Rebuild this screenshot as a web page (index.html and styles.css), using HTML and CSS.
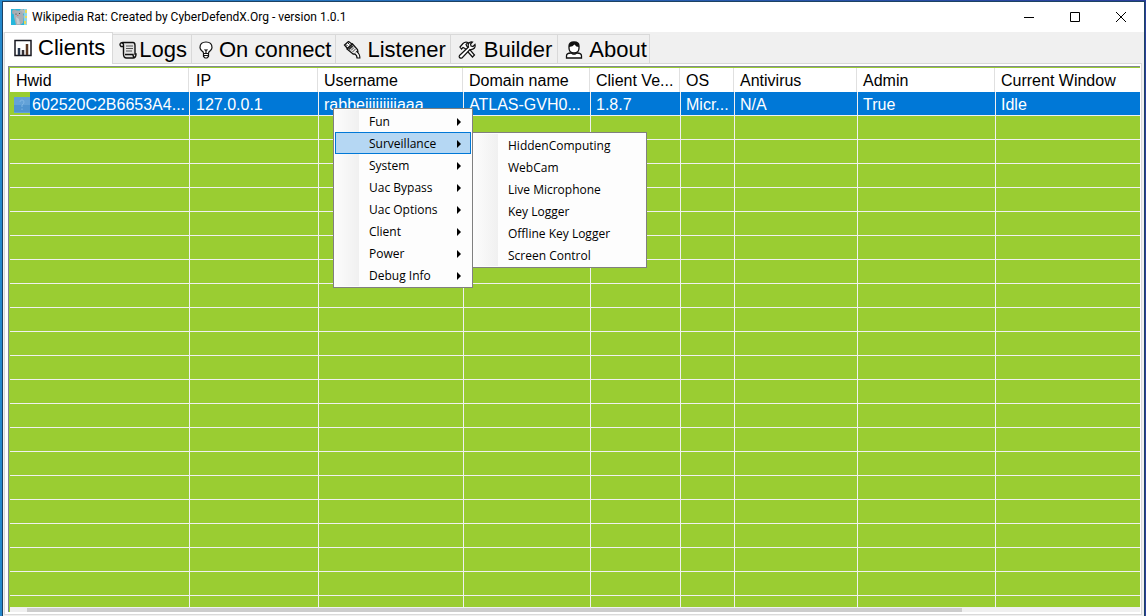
FILE: index.html
```html
<!DOCTYPE html>
<html lang="en">
<head>
<meta charset="utf-8">
<title>Wikipedia Rat: Created by CyberDefendX.Org - version 1.0.1</title>
<link rel="stylesheet" href="styles.css">
</head>
<body>
<main class="window">
  <header class="titlebar">
    <svg class="app-icon" viewBox="0 0 16 16" aria-hidden="true">
      <rect width="16" height="16" fill="#25b7dc"/><path d="M13 0h3v16h-3z" fill="#8fd6e6"/><path d="M14 1h2v3h-2zM14 7h2v2h-2zM13 12h2v3h-2z" fill="#e8d85a"/>
      <circle cx="3.500" cy="3" r="2.500" fill="#a3aab0"/><circle cx="11" cy="2.600" r="2.500" fill="#b4babf"/>
      <path d="M3 3c2-2 6-2 8 0l2 4-1 7-3 2H5l-1-4-1-4z" fill="#a9afb5"/><path d="M5 8l3 2 1 5H6z" fill="#c6cbd0"/>
      <circle cx="5" cy="5" r=".6" fill="#333"/><circle cx="8.500" cy="4.500" r=".6" fill="#333"/><path d="M6 6.500h1.500" stroke="#c77" />
    </svg>
    <h1 class="title">Wikipedia Rat: Created by CyberDefendX.Org - version 1.0.1</h1>
    <div class="controls">
      <button class="control" aria-label="Minimize"><svg viewBox="0 0 12 12"><path d="M1 6.500h10"/></svg></button>
      <button class="control" aria-label="Maximize"><svg viewBox="0 0 12 12"><path d="M1.500 1.500h9v9h-9z"/></svg></button>
      <button class="control" aria-label="Close"><svg viewBox="0 0 12 12"><path d="M1 1l10 10M11 1L1 11"/></svg></button>
    </div>
  </header>
  <div class="client">
    <nav class="tabs" role="tablist">
      <button class="tab selected" role="tab" aria-selected="true">
        <svg class="tab-icon" viewBox="0 0 18 18"><path d="M1 1.500h16v15H1z" fill="#fff" stroke="#17171f" stroke-width="1.500"/><path d="M5 9v7" stroke="#28374d" stroke-width="2.500"/><path d="M9 11v5" stroke="#343036" stroke-width="2.500"/><path d="M13 5v11" stroke="#5b3923" stroke-width="2.500"/></svg>
        <span>Clients</span></button>
      <button class="tab logs" role="tab">
        <svg class="tab-icon" viewBox="0 0 18 18" fill="none"><path d="M4 2h10q2 0 2 2v10q0 3-2 3H7q-2 0-2-3V4z" fill="#e4e4e4"/><path d="M4.500 5.500H2q-1-1-1-2Q1 1.500 4 1.500h10q2 0 2 3V13h1q0 4-3 4H7.500q-3 0-3-4V4q0-2-2-2M6 13.500h8q0 3 2 3" stroke="#111" stroke-width="1.400"/><path d="M7 5h7M7 7.500h7M7 10h6" stroke="#555" stroke-width="1.200"/></svg>
        <span>Logs</span></button>
      <button class="tab narrow" role="tab">
        <svg class="tab-icon bulb" viewBox="0 0 14 18" fill="none" stroke="#111" stroke-width="1.200"><path d="M4.500 12Q4.500 11 2.500 9.500Q1 8 1 6.500Q1 1 7 1T13 6.500Q13 8 11.500 9.500Q9.500 11 9.500 12v3.500l-1.500 1.500H6l-1.500-1.500z" fill="#fff"/><path d="M5.500 8.500l1.500 1 1.500-1M7 10v2M5 12.500h4M5 14.500h4"/></svg>
        <span>On connect</span></button>
      <button class="tab narrow" role="tab">
        <svg class="tab-icon" viewBox="0 0 18 18"><path d="M1.500 4l4-3.500L9 3 4.500 7.500z" fill="#fff" stroke="#111" stroke-width="1.300"/><path d="M3 3.500l1.500 1.500M5 2l1.500 1.500" stroke="#111"/><path d="M4 8l5.500-5 5 5.500q1 2-.5 3.500t-4 1z" fill="#eee" stroke="#111" stroke-width="1.300"/><path d="M5 7.500L9 4l1.500 1.500L6.500 9z" fill="#333"/><path d="M8 9.500l3-3M9.500 11l3-3" stroke="#444"/><path d="M12.500 11.500q3 2 3 6" fill="none" stroke="#111" stroke-width="4"/><path d="M12.500 11.500q3 2 3 5" fill="none" stroke="#fff" stroke-width="1.600"/></svg>
        <span>Listener</span></button>
      <button class="tab builder" role="tab">
        <svg class="tab-icon" viewBox="0 0 18 18"><g fill="#fff" stroke="#111" stroke-width="1.200"><path d="M2 6l3-3.500q2-2 5-1L8 3.500l1 2 7.500 8.500-2 2L7 7.500 5 6.500 3.500 8z"/><path d="M1.500 14.500l9-8.500q-1-3 1-4.500 1.500-1 3-.5L12.500 3l.5 2 2 .5 2-2q.5 2-.5 3.500-2 2-4.500 1.500L4 17q-1.500.5-2.500-.5-.6-1 0-2z"/></g></svg>
        <span>Builder</span></button>
      <button class="tab about" role="tab">
        <svg class="tab-icon" viewBox="0 0 18 18"><path d="M1.500 17v-2q0-3 4.500-3l2 1h2l2-1q4.500 0 4.500 3v2z" fill="#fff" stroke="#111" stroke-width="1.300"/><path d="M4 5q0-4 5-4t5 4v2q0 5-5 5T4 7z" fill="#fff" stroke="#111" stroke-width="1.300"/><path d="M4 6V4q1-3 5-3 5 0 5 5-3 0-4.500-2.500Q8 5.500 4 6z" fill="#111"/></svg>
        <span>About</span></button>
    </nav>
    <section class="page">
      <div class="list">
        <div class="grid-view">
          <table class="grid">
            <colgroup><col class="w-hwid"><col class="w-ip"><col class="w-user"><col class="w-domain"><col class="w-version"><col class="w-os"><col class="w-av"><col class="w-admin"><col></colgroup>
            <thead><tr><th>Hwid</th><th>IP</th><th>Username</th><th>Domain name</th><th>Client Ve...</th><th>OS</th><th>Antivirus</th><th>Admin</th><th>Current Window</th></tr></thead>
            <tbody>
              <tr class="active"><td class="hwid"><svg class="flag" viewBox="0 0 16 16" aria-hidden="true"><path fill="#63a2d8" d="M0 0h16v16H0z"/><path fill="#4f94d0" d="M0 8h16v7H0z"/><path d="M6 5q0-2 2-2t2 2-2 3v2M8 11.500v1.500" fill="none" stroke="#7fb6e4"/></svg>602520C2B6653A4...</td><td>127.0.0.1</td><td>rabbeijjjjjjjjaaa</td><td>ATLAS-GVH0...</td><td>1.8.7</td><td>Micr...</td><td>N/A</td><td>True</td><td>Idle</td></tr>
              <tr><td></td><td></td><td></td><td></td><td></td><td></td><td></td><td></td><td></td></tr>
              <tr><td></td><td></td><td></td><td></td><td></td><td></td><td></td><td></td><td></td></tr>
              <tr><td></td><td></td><td></td><td></td><td></td><td></td><td></td><td></td><td></td></tr>
              <tr><td></td><td></td><td></td><td></td><td></td><td></td><td></td><td></td><td></td></tr>
              <tr><td></td><td></td><td></td><td></td><td></td><td></td><td></td><td></td><td></td></tr>
              <tr><td></td><td></td><td></td><td></td><td></td><td></td><td></td><td></td><td></td></tr>
              <tr><td></td><td></td><td></td><td></td><td></td><td></td><td></td><td></td><td></td></tr>
              <tr><td></td><td></td><td></td><td></td><td></td><td></td><td></td><td></td><td></td></tr>
              <tr><td></td><td></td><td></td><td></td><td></td><td></td><td></td><td></td><td></td></tr>
              <tr><td></td><td></td><td></td><td></td><td></td><td></td><td></td><td></td><td></td></tr>
              <tr><td></td><td></td><td></td><td></td><td></td><td></td><td></td><td></td><td></td></tr>
              <tr><td></td><td></td><td></td><td></td><td></td><td></td><td></td><td></td><td></td></tr>
              <tr><td></td><td></td><td></td><td></td><td></td><td></td><td></td><td></td><td></td></tr>
              <tr><td></td><td></td><td></td><td></td><td></td><td></td><td></td><td></td><td></td></tr>
              <tr><td></td><td></td><td></td><td></td><td></td><td></td><td></td><td></td><td></td></tr>
              <tr><td></td><td></td><td></td><td></td><td></td><td></td><td></td><td></td><td></td></tr>
              <tr><td></td><td></td><td></td><td></td><td></td><td></td><td></td><td></td><td></td></tr>
              <tr><td></td><td></td><td></td><td></td><td></td><td></td><td></td><td></td><td></td></tr>
              <tr><td></td><td></td><td></td><td></td><td></td><td></td><td></td><td></td><td></td></tr>
              <tr><td></td><td></td><td></td><td></td><td></td><td></td><td></td><td></td><td></td></tr>
              <tr><td></td><td></td><td></td><td></td><td></td><td></td><td></td><td></td><td></td></tr>
            </tbody>
          </table>
        </div>
        <div class="scrollbar"><div class="thumb"></div></div>
        <ul class="menu context">
          <li><button class="item more">Fun</button></li>
          <li class="parent"><button class="item more open">Surveillance</button>
            <ul class="menu submenu">
              <li><button class="item">HiddenComputing</button></li>
              <li><button class="item">WebCam</button></li>
              <li><button class="item">Live Microphone</button></li>
              <li><button class="item">Key Logger</button></li>
              <li><button class="item">Offline Key Logger</button></li>
              <li><button class="item">Screen Control</button></li>
            </ul>
          </li>
          <li><button class="item more">System</button></li>
          <li><button class="item more">Uac Bypass</button></li>
          <li><button class="item more">Uac Options</button></li>
          <li><button class="item more">Client</button></li>
          <li><button class="item more">Power</button></li>
          <li><button class="item more">Debug Info</button></li>
        </ul>
      </div>
    </section>
  </div>
</main>
</body>
</html>
```
FILE: styles.css
```css
* { box-sizing: border-box; }

body {
  margin: 0;
  height: 100vh;
  padding: 1px 1px 0 2px;
  display: flex;
  overflow: hidden;
  background: linear-gradient(90deg, #2488cc, #2a3f9c);
  font-family: "Liberation Sans", Arial, sans-serif;
  color: #000;
}

button {
  border: 0;
  margin: 0;
  padding: 0;
  background: none;
  color: inherit;
  font: inherit;
}

.window {
  flex: 1;
  min-width: 0;
  display: flex;
  flex-direction: column;
  border: 1px solid #1d4263;
  border-bottom: 0;
  background: #f0f0f0;
}

.titlebar {
  display: flex;
  align-items: center;
  height: 30px;
  padding-left: 8px;
  background: #fff;
}

.app-icon { width: 16px; height: 16px; margin-right: 5px; }

.title {
  flex: 1;
  margin: 0;
  font: 400 12px/16px "Segoe UI", Roboto, sans-serif;
  white-space: nowrap;
}

.controls { display: flex; height: 100%; }

.control {
  width: 46px;
  display: flex;
  align-items: center;
  justify-content: center;
}

.control svg { width: 12px; height: 12px; fill: none; stroke: #000; }

.client {
  flex: 1;
  min-height: 0;
  display: flex;
  flex-direction: column;
  padding: 0 2px 1px 1px;
}

.tabs { display: flex; align-items: flex-end; height: 31px; }

.tab {
  display: flex;
  align-items: center;
  gap: 6px;
  height: 29px;
  padding: 2px 5px 0 7px;
  border: 1px solid #d9d9d9;
  border-left: 0;
  border-bottom: 0;
  font-size: 22px;
  line-height: 26px;
}

.tab-icon { width: 18px; height: 18px; flex: none; }
.tab .bulb { width: 14px; }
.tab.narrow { padding-right: 4px; }
.tab.logs { gap: 2px; padding: 2px 4px 0 6px; }
.tab.builder { gap: 8px; }
.tab.about { padding-right: 2px; }

.tab.selected {
  height: 32px;
  margin-bottom: -1px;
  padding: 0 7px 2px 9px;
  border-left: 1px solid #d9d9d9;
  background: #fff;
  z-index: 1;
}

.page {
  flex: 1;
  min-height: 0;
  display: flex;
  padding: 2px 1px 2px 3px;
  border: 1px solid #d9d9d9;
  background: #fff;
}

.list {
  position: relative;
  flex: 1;
  min-width: 0;
  display: flex;
  flex-direction: column;
  padding: 1px 0 0 1px;
  border: 1px solid #828790;
  border-right: 0;
  border-bottom: 0;
  background: #9acd32;
}

.grid-view {
  flex: 1;
  min-height: 0;
  overflow: hidden;
  border-bottom: 1px solid #f0f0f0;
}

.grid {
  width: 100%;
  table-layout: fixed;
  border-collapse: separate;
  border-spacing: 0;
  font-size: 16px;
}

.w-hwid { width: 180px; }
.w-ip { width: 129px; }
.w-user { width: 145px; }
.w-domain { width: 127px; }
.w-version { width: 90px; }
.w-os { width: 54px; }
.w-av { width: 123px; }
.w-admin { width: 138px; }

.grid th,
.grid td {
  height: 24px;
  padding: 0 0 0 6px;
  overflow: hidden;
  white-space: nowrap;
  text-align: left;
  font-weight: 400;
}

.grid th {
  line-height: 23px;
  background: linear-gradient(#e0e0e0, #e0e0e0) right 1px top 0 / 1px 100% no-repeat #fff;
}

.grid td {
  padding-top: 3px;
  line-height: 20px;
  border-right: 1px solid #f0f0f0;
  border-bottom: 1px solid #f0f0f0;
}

.grid th:nth-child(n + 3),
.grid td:nth-child(n + 3) { padding-left: 5px; }

.grid th:last-child { background: #fff; }
.grid td:last-child { border-right: 0; }

.grid .active td { background: #0078d7; color: #fff; }

.grid .active .hwid {
  padding-left: 4px;
  background: linear-gradient(90deg, #9acd32 20px, #0078d7 20px);
}

.flag {
  width: 16px;
  height: 16px;
  margin-right: 2px;
  vertical-align: -3px;
}

.scrollbar { height: 4px; padding-left: 17px; background: #f0f0f0; }
.thumb { width: 84%; height: 100%; background: #cdcdcd; }

.menu {
  position: absolute;
  margin: 0;
  padding: 1px;
  list-style: none;
  border: 1px solid #808080;
  background: linear-gradient(90deg, #fcfcfc, #f0f0f0) 1px 1px / 24px calc(100% - 2px) no-repeat #fdfdfd;
  font: 12px/18px "Segoe UI", "Open Sans", sans-serif;
}

.context { left: 324px; top: 41px; width: 140px; }
.parent { position: relative; }
.submenu { left: 137px; top: 0; width: 175px; z-index: 1; }

.item {
  display: flex;
  align-items: center;
  justify-content: space-between;
  width: 100%;
  height: 22px;
  padding: 1px 9px 0 33px;
  border: 1px solid transparent;
  white-space: nowrap;
}

.item.open { border-color: #0078d7; background: #b5d7f3; }

.more::after {
  content: "";
  border: 4px solid transparent;
  border-left-color: #000;
  border-right: 0;
}
```
